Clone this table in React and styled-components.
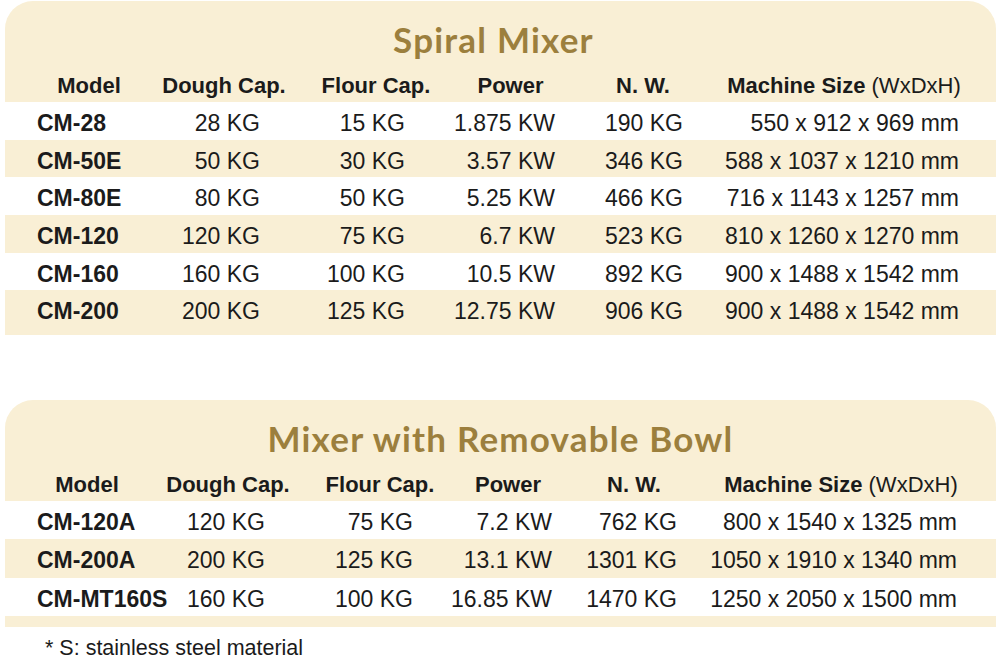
import React from 'react';
import styled, { createGlobalStyle } from 'styled-components';

const CREAM = '#f9efd5';
const GOLD = '#9c7f3d';
const INK = '#1b1b1b';

const tables = [
  {
    title: 'Spiral Mixer',
    titleShift: 14,
    heads: [168, 102, 202, 67, 198, 204],
    cols: '175px 80px 145px 150px 128px 276px',
    rowH: 37.7,
    footH: 7,
    rows: [
      ['CM-28', '28 KG', '15 KG', '1.875 KW', '190 KG', '550 x 912 x 969 mm'],
      ['CM-50E', '50 KG', '30 KG', '3.57 KW', '346 KG', '588 x 1037 x 1210 mm'],
      ['CM-80E', '80 KG', '50 KG', '5.25 KW', '466 KG', '716 x 1143 x 1257 mm'],
      ['CM-120', '120 KG', '75 KG', '6.7 KW', '523 KG', '810 x 1260 x 1270 mm'],
      ['CM-160', '160 KG', '100 KG', '10.5 KW', '892 KG', '900 x 1488 x 1542 mm'],
      ['CM-200', '200 KG', '125 KG', '12.75 KW', '906 KG', '900 x 1488 x 1542 mm'],
    ],
  },
  {
    title: 'Mixer with Removable Bowl',
    titleShift: 0,
    heads: [164, 118, 186, 70, 182, 232],
    cols: '175px 85px 148px 139px 125px 280px',
    rowH: 38.3,
    footH: 11,
    rows: [
      ['CM-120A', '120 KG', '75 KG', '7.2 KW', '762 KG', '800 x 1540 x 1325 mm'],
      ['CM-200A', '200 KG', '125 KG', '13.1 KW', '1301 KG', '1050 x 1910 x 1340 mm'],
      ['CM-MT160S', '160 KG', '100 KG', '16.85 KW', '1470 KG', '1250 x 2050 x 1500 mm'],
    ],
  },
];

const headLabels = ['Model', 'Dough Cap.', 'Flour Cap.', 'Power', 'N. W.'];

export default function App() {
  return (
    <Page>
      <GlobalStyle />
      {tables.map((t) => (
        <Panel key={t.title}>
          <Top>
            <Title $shift={t.titleShift}>{t.title}</Title>
            <HeadRow>
              {headLabels.map((h, i) => (
                <HeadCell key={h} $w={t.heads[i]}>
                  {h}
                </HeadCell>
              ))}
              <HeadCell $w={t.heads[5]}>
                Machine Size<Unit>&nbsp;(WxDxH)</Unit>
              </HeadCell>
            </HeadRow>
          </Top>
          {t.rows.map((r, i) => (
            <Row key={r[0]} $cols={t.cols} $h={t.rowH} $striped={i % 2 === 1}>
              <ModelCell>{r[0]}</ModelCell>
              {r.slice(1).map((v, j) => (
                <Cell key={j}>{v}</Cell>
              ))}
            </Row>
          ))}
          <Foot $h={t.footH} />
        </Panel>
      ))}
      <Note>* S: stainless steel material</Note>
    </Page>
  );
}

const GlobalStyle = createGlobalStyle`
  body {
    margin: 0;
    background: #fff;
    font-family: "Liberation Sans", Arial, sans-serif;
    color: ${INK};
  }
`;

const Page = styled.div`
  width: 1000px;
  padding: 1px 4px 0 5px;
  box-sizing: border-box;
  display: flex;
  flex-direction: column;
  gap: 65px;
`;

const Panel = styled.section`
  display: flex;
  flex-direction: column;
  overflow: hidden;
  border-radius: 28px 28px 0 0;
`;

const Top = styled.div`
  background: ${CREAM};
`;

const Title = styled.h2`
  margin: 0;
  padding: 21px ${(p) => p.$shift}px 0 0;
  font-family: Lato, "Open Sans", sans-serif;
  font-weight: 700;
  font-size: 35px;
  line-height: 35px;
  letter-spacing: 1.2px;
  text-align: center;
  color: ${GOLD};
`;

const HeadRow = styled.div`
  display: flex;
  height: 45px;
  padding-top: 12px;
  box-sizing: border-box;
  font-size: 22px;
  font-weight: 700;
  line-height: 33px;
`;

const HeadCell = styled.div`
  flex: 0 0 ${(p) => p.$w}px;
  min-width: 0;
  display: flex;
  justify-content: center;
  white-space: nowrap;
`;

const Unit = styled.span`
  font-weight: 400;
`;

const Row = styled.div`
  display: grid;
  grid-template-columns: ${(p) => p.$cols};
  height: ${(p) => p.$h}px;
  padding-top: 5px;
  box-sizing: border-box;
  background: ${(p) => (p.$striped ? CREAM : '#fff')};
  font-size: 23px;
  line-height: 32.8px;
  white-space: nowrap;
`;

const ModelCell = styled.div`
  padding-left: 32px;
  font-weight: 700;
`;

const Cell = styled.div`
  text-align: right;
`;

const Foot = styled.div`
  height: ${(p) => p.$h}px;
  background: ${CREAM};
`;

const Note = styled.p`
  margin: -56px 0 0 40px;
  font-size: 21.5px;
  line-height: 24px;
`;
